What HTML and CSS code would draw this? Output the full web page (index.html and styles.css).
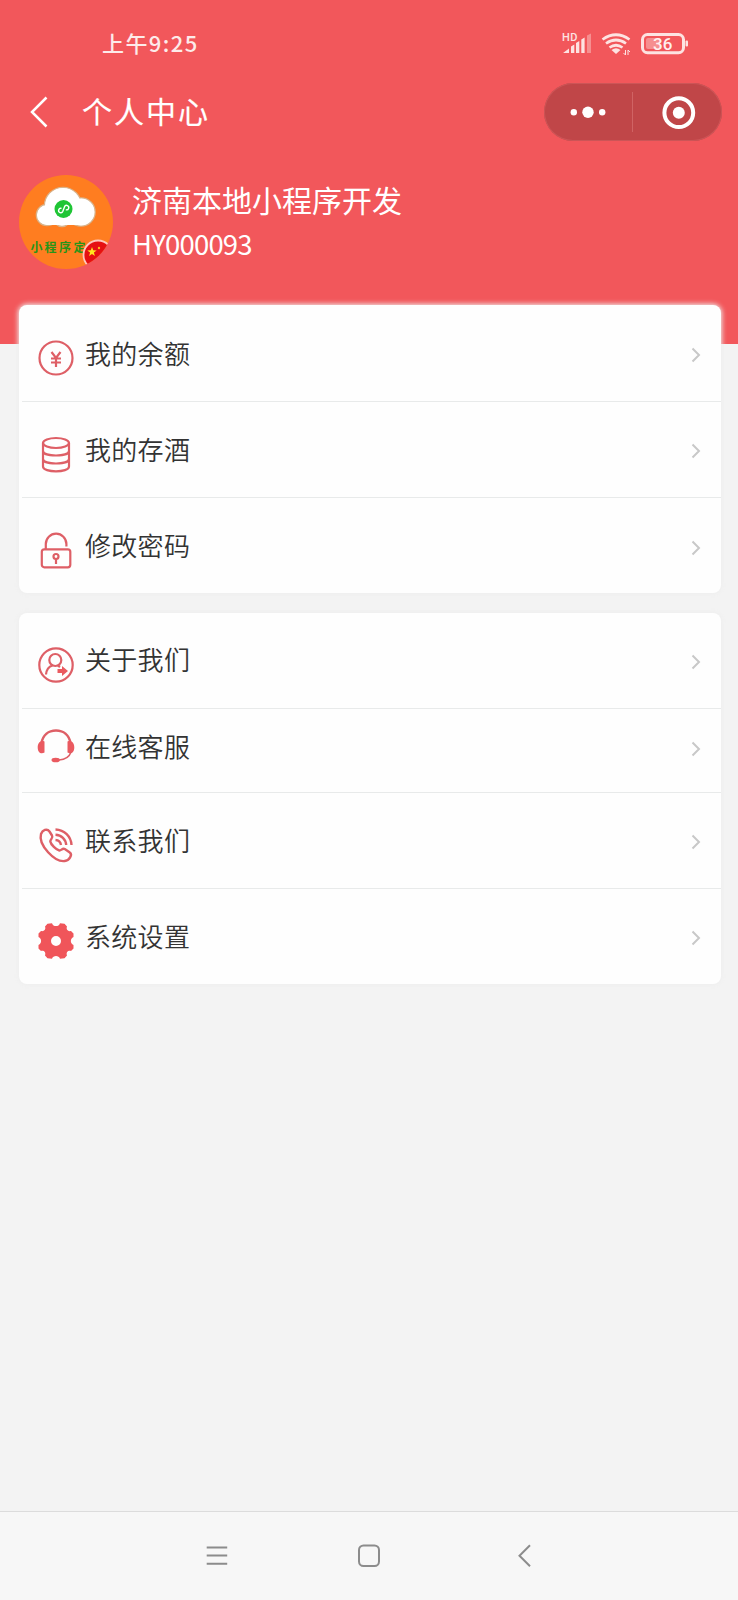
FILE: index.html
```html
<!DOCTYPE html>
<html lang="zh-CN">
<head>
<meta charset="utf-8">
<title>个人中心</title>
<link rel="stylesheet" href="styles.css">
</head>
<body>
<div class="screen">
  <header class="header">
    <div class="status">
      <span class="time">上午9:25</span>
      <svg class="status-icons" width="130" height="30" viewBox="560 28 130 30">
        <text class="hd" x="562" y="40.500">HD</text>
        <g fill="#fde3e2">
          <path d="M563 53l6-4.500V53zM571 46.500l3.300-2V53H571zM576 43l3.300-2v12H576zM581.300 39.500l3.300-2V53h-3.300z"/>
          <path d="M587 35.500l4-2V53h-4z" opacity=".4"/>
          <path d="M616 54l-4.500-4q4.500-3.500 9 0z"/>
          <path d="M625.500 50v5l-2-2M628 55v-5l2 2" fill="none" stroke="#fde3e2"/>
        </g>
        <g fill="none" stroke="#fde3e2" stroke-width="3">
          <path d="M602.500 39.500q13.500-9.500 27 0M606 43.500q10-7 20 0M609.500 47.500q6.500-4.500 13 0" stroke-width="2.700"/>
          <rect x="642.500" y="34.500" width="41" height="18.200" rx="5"/>
        </g>
        <rect x="646" y="38" width="14" height="11" rx="2" fill="#fde3e2" opacity=".4"/>
        <rect x="685.500" y="40.500" width="2.500" height="6" rx="1" fill="#fde3e2"/>
        <text class="pct" x="653" y="49.700">36</text>
      </svg>
    </div>
    <div class="titlebar">
      <svg class="back" width="20" height="34" viewBox="0 0 20 34"><path d="M17.500 2.500L3 17l14.500 14.500" fill="none" stroke="#fff" stroke-width="2.500"/></svg>
      <h1 class="title">个人中心</h1>
      <div class="capsule">
        <svg width="88" height="58" viewBox="0 0 88 58" fill="#fff"><circle cx="29.800" cy="29.300" r="3.200"/><circle cx="44" cy="29.300" r="5.700"/><circle cx="58.200" cy="29.300" r="3.200"/></svg>
        <i class="capsule-line"></i>
        <svg width="88" height="58" viewBox="0 0 88 58"><circle cx="45.800" cy="29.700" r="14.400" fill="none" stroke="#fff" stroke-width="4"/><circle cx="45.800" cy="29.700" r="6" fill="#fff"/></svg>
      </div>
    </div>
    <div class="profile">
      <svg class="avatar" width="94" height="94" viewBox="0 0 94 94">
        <defs><clipPath id="round"><circle cx="47" cy="47" r="47"/></clipPath></defs>
        <circle cx="47" cy="47" r="47" fill="#ff7d20"/>
        <g fill="#fff" stroke="#d9b48c" stroke-width="1.600">
          <circle cx="28" cy="40" r="10.500"/><circle cx="62" cy="37" r="14"/><circle cx="44" cy="31" r="18.500"/><circle cx="43" cy="43" r="8.500"/>
        </g>
        <g fill="#fff"><circle cx="28" cy="40" r="10"/><circle cx="62" cy="37" r="13.500"/><circle cx="44" cy="31" r="18"/><rect x="28" y="36" width="34" height="14"/></g>
        <circle cx="44.500" cy="34" r="9" fill="#1fc535"/>
        <path d="M42.500 34.200a2.200 2.200 0 1 0 2.200 2.300v-5a2.200 2.200 0 1 1 2.200 2.400" transform="rotate(20 44.700 34)" fill="none" stroke="#fff" stroke-width="1.400"/>
        <g class="avatar-text"><text x="11.500" y="76.500">小</text><text x="25.500" y="76.500">程</text><text x="40" y="76.500">序</text><text x="54.500" y="76.500">定</text></g>
        <g clip-path="url(#round)"><circle cx="79" cy="80" r="14.500" fill="#e60f12" stroke="#ffc7bd" stroke-width="1.800"/></g>
        <path d="M73 72l1.200 3.300 3.500.1-2.800 2.100 1 3.400-2.900-2-2.900 2 1-3.400-2.800-2.100 3.500-.1z" fill="#ffe51f"/><circle cx="80" cy="73" r="1.200" fill="#ffb51f"/>
      </svg>
      <div class="who"><div class="name">济南本地小程序开发</div><div class="code">HY000093</div></div>
    </div>
  </header>

  <main class="content">
    <section class="card">
      <a class="row r1"><svg class="icon" viewBox="0 0 38 38"><circle cx="19" cy="19" r="16.500"/><path d="M14.500 13l4.500 6 4.500-6M19 19v9M14 19.500h10M14 23.500h10" stroke-width="2.200"/></svg><span class="label">我的余额</span><svg class="chev" viewBox="0 0 10 16"><path d="M1.500 1.500L8 8l-6.500 6.500"/></svg></a>
      <a class="row r2"><svg class="icon" viewBox="0 0 38 38"><ellipse cx="19" cy="7" rx="13" ry="5"/><path d="M6 7v23.500c0 6.500 26 6.500 26 0V7M6 15c0 6 26 6 26 0M6 23c0 6 26 6 26 0"/></svg><span class="label">我的存酒</span><svg class="chev" viewBox="0 0 10 16"><path d="M1.500 1.500L8 8l-6.500 6.500"/></svg></a>
      <a class="row r3"><svg class="icon" viewBox="0 0 38 38"><rect x="4.800" y="17.300" width="28.500" height="18" rx="2.500"/><path d="M8.800 17V12a10.300 10.300 0 0 1 20.600 0v2.500"/><circle cx="19" cy="24.500" r="2.500"/><path d="M19 27v5"/></svg><span class="label">修改密码</span><svg class="chev" viewBox="0 0 10 16"><path d="M1.500 1.500L8 8l-6.500 6.500"/></svg></a>
    </section>
    <section class="card">
      <a class="row r4"><svg class="icon" viewBox="0 0 38 38"><circle cx="19" cy="19" r="16.700"/><circle cx="18.300" cy="14" r="6"/><path d="M9 28.500c.5-5 3-8 6.500-9M21 19.500l2 1.500"/><path class="solid" d="M20.500 23h4.500v-3l6 5-6 5v-3h-4.500z"/></svg><span class="label">关于我们</span><svg class="chev" viewBox="0 0 10 16"><path d="M1.500 1.500L8 8l-6.500 6.500"/></svg></a>
      <a class="row r5"><svg class="icon" viewBox="0 0 38 38"><path d="M4.500 15C6 7 11.500 2.500 19 2.500S32 7 33.500 15" stroke-width="2.400"/><path class="solid" d="M7.500 13.500v11C4 26.500.7 24.500.7 19.500s3-7.500 6.800-6zM30.500 13.500v11c3.500 2 6.800 0 6.800-5s-3-7.500-6.800-6z"/><path d="M34 24c-1.500 4.500-5 7.500-12 8" stroke-width="1.600"/><ellipse class="solid" cx="18.700" cy="32" rx="4.200" ry="2.300"/></svg><span class="label">在线客服</span><svg class="chev" viewBox="0 0 10 16"><path d="M1.500 1.500L8 8l-6.500 6.500"/></svg></a>
      <a class="row r6"><svg class="icon" viewBox="0 0 38 38"><path d="M4 8c1.500-4 6-6 8.500-2.500l2.500 4c1.500 2.500-2 4-1.700 6 .5 3 6 8.500 9 9 2 .3 3-2.800 5.500-1.500l5 3.500c3 2-.5 8-5 8.500C18 36.500 1 19 4 8z" stroke-width="2.400"/><path d="M18.500 3.500c9 .3 15.500 7 16 15.500M18.500 8.700c6 .3 10.300 4.500 10.700 10.300M18.500 14c3.200.2 5 2 5.500 5" stroke-width="2.400"/></svg><span class="label">联系我们</span><svg class="chev" viewBox="0 0 10 16"><path d="M1.500 1.500L8 8l-6.500 6.500"/></svg></a>
      <a class="row r7"><svg class="icon" viewBox="0 0 38 38"><path class="gear" fill-rule="evenodd" d="M10.500 1.700L15 1.200C16 5 22 5 23 1.200L27.500 1.700 30 4.500C28.800 7.500 31 9.700 34 9L36.500 11.500V15C33 16.500 33 21.500 36.500 23V26.500L34 29C31 28.300 28.800 30.500 30 33.500L27.500 36.300 23 36.800C22 33 16 33 15 36.800L10.500 36.300 8 33.500C9.200 30.500 7 28.300 4 29L1.500 26.500V23C5 21.500 5 16.500 1.500 15V11.500L4 9C7 9.700 9.200 7.500 8 4.500zM19 14a5 5 0 1 0 0 10a5 5 0 1 0 0-10z"/></svg><span class="label">系统设置</span><svg class="chev" viewBox="0 0 10 16"><path d="M1.500 1.500L8 8l-6.500 6.500"/></svg></a>
    </section>
  </main>

  <nav class="navbar">
    <svg width="24" height="24" viewBox="0 0 24 24"><path d="M1.700 3.500h20.500M1.700 11.500h20.500M1.700 19.800h20.500"/></svg>
    <svg width="24" height="24" viewBox="0 0 24 24"><rect x="2" y="1.500" width="20" height="20.500" rx="4.500"/></svg>
    <svg width="24" height="24" viewBox="0 0 24 24"><path d="M17 1.200L6.500 11.700L17 22.200"/></svg>
  </nav>
</div>
</body>
</html>
```
FILE: styles.css
```css
* { box-sizing: border-box; }
body { margin: 0; font-family: "Noto Sans CJK SC", sans-serif; background: #f3f3f3; }
svg { display: block; flex: none; }
.screen { width: 738px; height: 1600px; display: flex; flex-direction: column; background: #f3f3f3; }
.header { height: 344px; flex: none; background: #f2575b; color: #fff; }
.status { height: 83px; display: flex; justify-content: space-between; align-items: flex-start; padding: 28px 48px 0 102px; }
.time { margin-top: -2px; font-size: 22px; line-height: 32px; letter-spacing: 1.4px; font-weight: 500; color: #fdebea; }
.hd { font: 500 11px Roboto, sans-serif; fill: #fde3e2; letter-spacing: .5px; }
.pct { font: 500 17px Roboto, sans-serif; fill: #fff0ef; }
.titlebar { height: 58px; display: flex; align-items: center; padding: 0 16px 0 29px; }
.title { margin: -4px auto 0 33px; font-size: 30px; line-height: 44px; font-weight: 400; letter-spacing: 2px; -webkit-text-stroke: .15px #fff; }
.capsule { width: 178px; height: 58px; border-radius: 29px; background: #c04648; box-shadow: inset 0 0 0 1px #cc5557; display: flex; align-items: center; }
.capsule-line { width: 1px; height: 40px; background: #d06364; }
.profile { display: flex; padding: 34px 0 0 19px; }
.who { padding: 1px 0 0 19px; }
.name { font-size: 30px; line-height: 46px; }
.code { font-size: 27.5px; line-height: 42px; letter-spacing: -.8px; }
.avatar-text { font: 700 12px "Noto Sans CJK SC", sans-serif; fill: #279418; }
.content { flex: 1; padding: 0 17px 0 19px; margin-top: -39px; display: flex; flex-direction: column; gap: 20px; }
.card { background: #fefefe; border-radius: 8px; box-shadow: 0 0 5px 1px #eeeeee; }
.row { display: flex; align-items: flex-start; margin-left: 3px; padding: 28px 20px 0 15px; border-bottom: 1px solid #e8eaea; }
.row:last-child { border-bottom: 0; }
.r1 { height: 97px; }
.r2 { height: 96px; }
.r2, .r3 { padding-top: 27px; }
.r3 { height: 95px; }
.r5 { height: 84px; padding-top: 17px; }
.r4, .r6 { height: 96px; padding-top: 26px; }
.r6 { padding-top: 27px; }
.r7 { height: 95px; padding-top: 27px; }
.icon { width: 38px; height: 38px; margin-top: 6px; fill: none; stroke: #de5f66; stroke-width: 2.2; }
.r2 .icon, .r3 .icon, .r4 .icon { margin-top: 7px; }
.r5 .icon { margin-top: 2px; }
.solid { fill: #ea5a60; stroke: none; }
.gear { fill: #f0555a; stroke: none; }
.label { flex: 1; margin-left: 10px; font-size: 26px; line-height: 40px; letter-spacing: .3px; color: #333; font-weight: 350; }
.chev { width: 10px; height: 16px; margin-top: 14px; fill: none; stroke: #c8c8c8; stroke-width: 2; }
.r3 .chev, .r4 .chev, .r5 .chev { margin-top: 15px; }
.navbar { height: 89px; flex: none; display: flex; justify-content: space-between; padding: 32px 201px 0 205px; background: #f7f7f7; border-top: 1px solid #dcdcdc; fill: none; stroke: #8c8c8c; stroke-width: 2; }
.navbar svg:nth-child(2) { margin-right: 4px; }
```
